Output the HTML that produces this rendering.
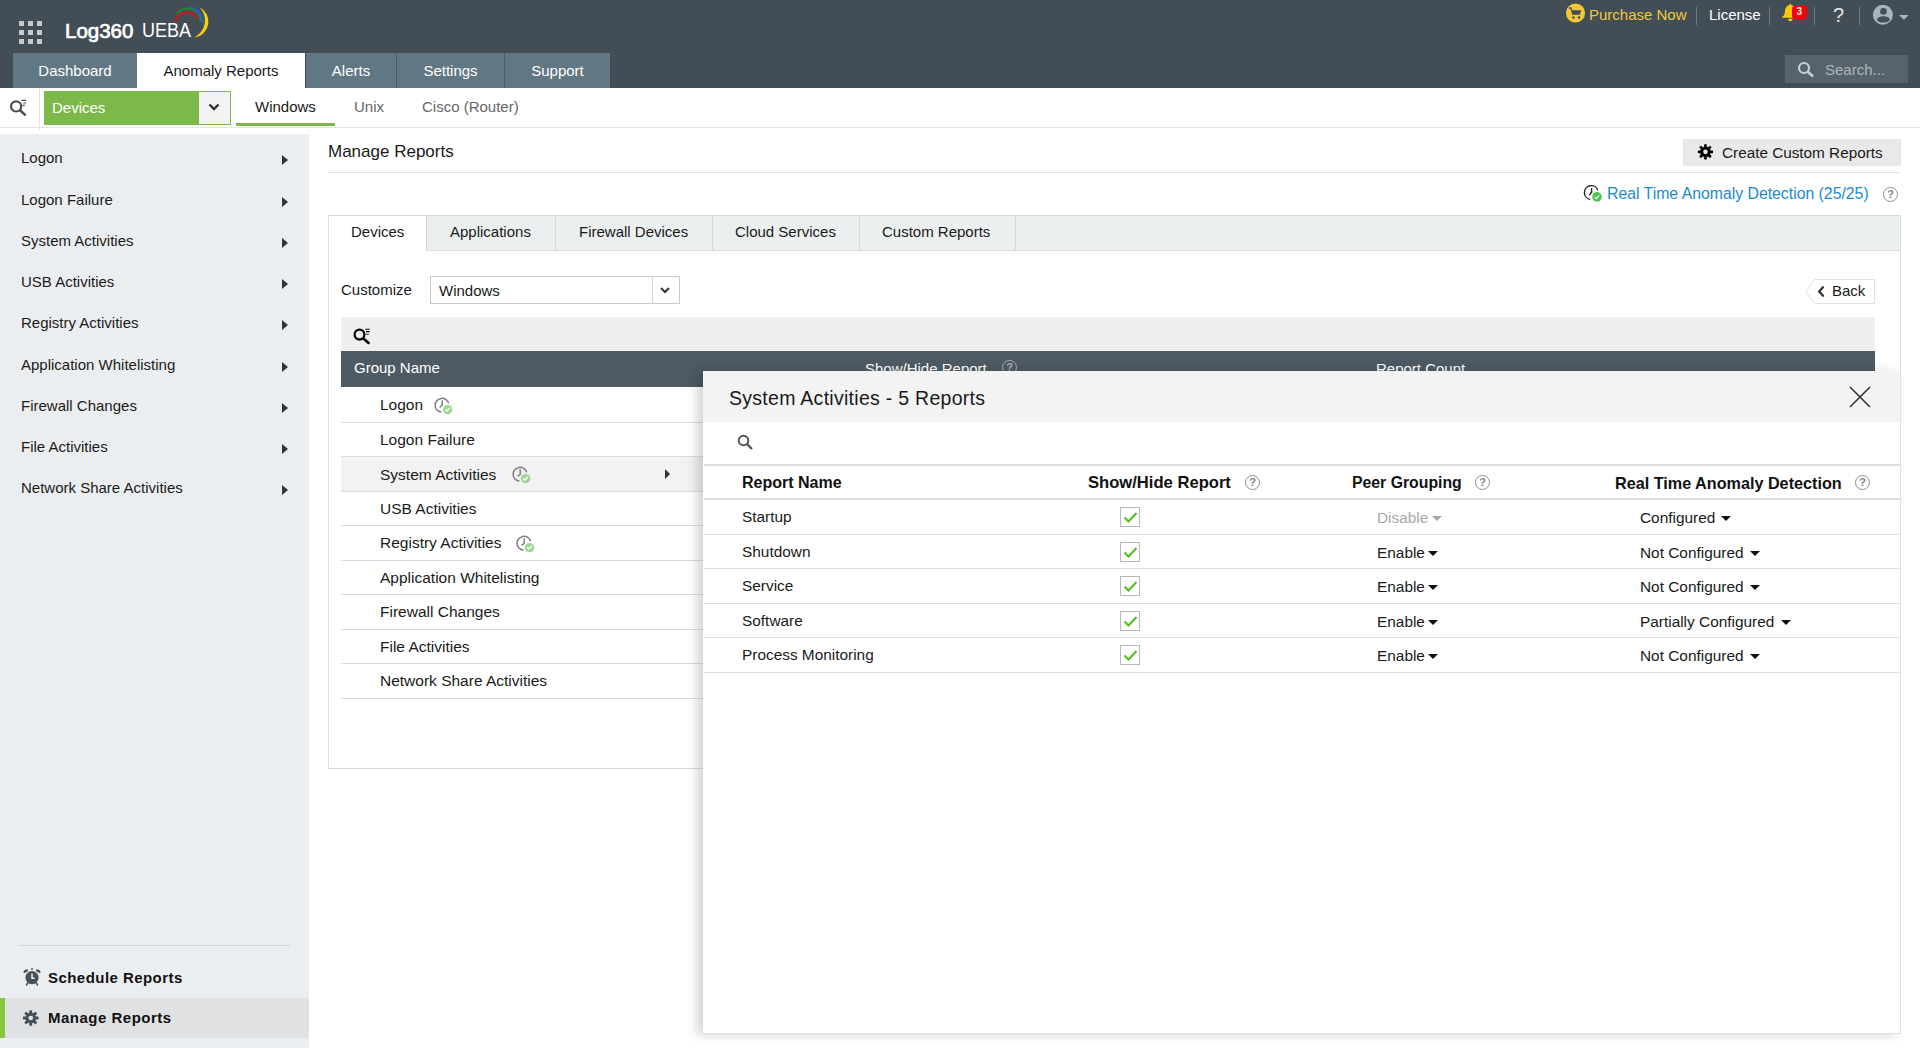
<!DOCTYPE html>
<html><head><meta charset="utf-8">
<style>
*{margin:0;padding:0;box-sizing:border-box}
html,body{width:1920px;height:1048px;overflow:hidden;background:#fff;font-family:"Liberation Sans",sans-serif;color:#1a1a1a}
.a{position:absolute}
.t{position:absolute;white-space:nowrap;line-height:1}
#hdr{left:0;top:0;width:1920px;height:88px;background:#424d56}
.tab{position:absolute;top:53px;height:35px;background:#627784;color:#fff;font-size:15px;line-height:35px;text-align:center}
.sb{position:absolute;left:21px;font-size:15px;color:#1b1b1b}
.sba{position:absolute;left:282px;width:0;height:0;border-top:5px solid transparent;border-bottom:5px solid transparent;border-left:6px solid #333}
.row{position:absolute;left:341px;width:362px;border-bottom:1px solid #dcdcdc}
.rt{position:absolute;left:380px;font-size:15.5px;color:#1a1a1a}
.mrow{position:absolute;left:704px;width:1196px;border-bottom:1px solid #dedede}
.mt{position:absolute;font-size:15.4px;color:#1a1a1a}
.cb{position:absolute;left:1120px;width:20px;height:20px;border:1px solid #b9b9b9;background:#fff}
.cb svg{position:absolute;left:2px;top:3px}
.help{position:absolute;width:15px;height:15px;border:1px solid #8f8f8f;border-radius:50%;font-size:11px;font-weight:bold;line-height:13px;text-align:center;color:#808488}
.caret{position:absolute;width:0;height:0;border-left:5px solid transparent;border-right:5px solid transparent;border-top:5px solid #111}
.div{position:absolute;top:7px;width:1px;height:18px;background:#6f7a82}
</style></head><body>
<!-- HEADER -->
<div id="hdr" class="a"></div>
<!-- grid icon -->
<svg class="a" style="left:19px;top:21px" width="23" height="23" viewBox="0 0 23 23" fill="#c9c9c9">
<rect x="0" y="0" width="5" height="5"/><rect x="9" y="0" width="5" height="5"/><rect x="18" y="0" width="5" height="5"/>
<rect x="0" y="9" width="5" height="5"/><rect x="9" y="9" width="5" height="5"/><rect x="18" y="9" width="5" height="5"/>
<rect x="0" y="18" width="5" height="5"/><rect x="9" y="18" width="5" height="5"/><rect x="18" y="18" width="5" height="5"/>
</svg>
<div class="t" style="left:65px;top:21px;font-size:20.5px;color:#fff;-webkit-text-stroke:0.7px #fff">Log360</div>
<div class="t" style="left:142px;top:20px;font-size:20px;color:#fff;transform:scaleX(0.9);transform-origin:0 0">UEBA</div>
<svg class="a" style="left:165px;top:0px" width="50" height="45" viewBox="0 0 50 45" fill="none">
<path d="M10.3 21.9 A12.1 12.1 0 0 1 32.6 18.5" stroke="#e3101b" stroke-width="1.8"/>
<path d="M12 13.7 A13.2 13.2 0 0 1 35.6 21.5" stroke="#21892f" stroke-width="2"/>
<path d="M21.9 6.4 A15.8 15.8 0 0 1 37.8 27.9 A22.7 22.7 0 0 0 21.9 6.4Z" fill="#2a62ad"/>
<path d="M34.4 7.3 A15.9 15.9 0 0 1 29.2 37.4 A18.6 18.6 0 0 0 34.4 7.3Z" fill="#f7cf0a"/>
</svg>
<!-- top right -->
<svg class="a" style="left:1565px;top:3px" width="21" height="21" viewBox="0 0 21 21">
<circle cx="10.5" cy="10" r="9.6" fill="#f2c834"/>
<path d="M6.2 7.2 H16.1 L15 11.7 H7.2 Z" fill="#424d56"/>
<path d="M3.8 5 H5.8 L6.8 7.8" stroke="#424d56" stroke-width="1.4" fill="none"/>
<circle cx="8.5" cy="14.5" r="1.25" fill="#424d56"/><circle cx="14" cy="14.5" r="1.25" fill="#424d56"/>
</svg>
<div class="t" style="left:1589px;top:7px;font-size:15px;color:#f0c83c">Purchase Now</div>
<div class="div" style="left:1696px"></div>
<div class="t" style="left:1709px;top:7px;font-size:15px;color:#fff">License</div>
<div class="div" style="left:1769px"></div>
<svg class="a" style="left:1781px;top:0px" width="28" height="24" viewBox="0 0 28 24">
<path d="M9.4 3.8 Q10.2 3.8 10.4 5 Q14.6 6 14.8 11 Q15 15.5 17.6 16.8 V17.8 H1.2 V16.8 Q3.8 15.5 4 11 Q4.2 6 8.4 5 Q8.6 3.8 9.4 3.8Z" fill="#f6cb0c"/>
<path d="M6.8 18.7 H11.9 Q11 21.2 9.4 21.2 Q7.8 21.2 6.8 18.7Z" fill="#f6cb0c"/>
<rect x="11" y="5.7" width="15" height="13.4" rx="3.5" fill="#ff0000"/>
<text x="18.3" y="15.2" font-size="10" font-weight="bold" fill="#fff" text-anchor="middle" font-family="Liberation Sans">3</text>
</svg>
<div class="div" style="left:1814px"></div>
<div class="t" style="left:1833px;top:5px;font-size:20px;color:#e6e6e6">?</div>
<div class="div" style="left:1859px"></div>
<svg class="a" style="left:1872px;top:5px" width="40" height="21" viewBox="0 0 40 21">
<circle cx="10.9" cy="9.8" r="10" fill="#a9b5bc"/>
<circle cx="11.5" cy="6.4" r="3.3" fill="#434e57"/>
<ellipse cx="11.4" cy="14.4" rx="6.4" ry="3.2" fill="#434e57"/>
<path d="M27 10 L36.8 10 L31.9 14.7Z" fill="#a9b5bc"/>
</svg>
<!-- search -->
<div class="a" style="left:1785px;top:55px;width:123px;height:28px;background:#57636c"></div>
<svg class="a" style="left:1797px;top:61px" width="18" height="17" viewBox="0 0 18 17">
<circle cx="7" cy="7" r="5" stroke="#c8cdd0" stroke-width="2.2" fill="none"/>
<path d="M10.5 10.5 L16 15.5" stroke="#c8cdd0" stroke-width="2.6"/>
</svg>
<div class="t" style="left:1825px;top:62px;font-size:15px;color:#aeb5ba">Search...</div>

<!-- tabs -->
<div class="tab" style="left:13px;width:124px">Dashboard</div>
<div class="tab" style="left:137px;width:168px;background:#fff;color:#1a1a1a">Anomaly Reports</div>
<div class="tab" style="left:306px;width:90px">Alerts</div>
<div class="tab" style="left:397px;width:107px">Settings</div>
<div class="tab" style="left:505px;width:105px">Support</div>
<div class="a" style="left:396px;top:53px;width:1px;height:35px;background:#4d5d68"></div>
<div class="a" style="left:504px;top:53px;width:1px;height:35px;background:#4d5d68"></div>

<!-- sub bar -->
<div class="a" style="left:0;top:127px;width:1920px;height:1px;background:#e3e3e3"></div>
<div class="a" style="left:39px;top:88px;width:1px;height:42px;background:#e3e3e3"></div>
<svg class="a" style="left:5px;top:95px" width="24" height="24" viewBox="0 0 24 24">
<circle cx="11.1" cy="11.4" r="5.1" stroke="#4a5056" stroke-width="2.2" fill="none"/>
<path d="M15 15.3 L19.8 19.6" stroke="#4a5056" stroke-width="2.6" stroke-linecap="round"/>
<path d="M16.5 5.4 H21 M18.2 8 H21 M17.5 10.4 H19.8" stroke="#4a5056" stroke-width="1.1"/>
</svg>
<div class="a" style="left:44px;top:91px;width:187px;height:34px;background:#7cb948;border:1px solid #7cb948"></div>
<div class="a" style="left:199px;top:92px;width:31px;height:32px;background:#f2f2f2"></div>
<svg class="a" style="left:208px;top:103px" width="12" height="9" viewBox="0 0 12 9"><path d="M1.5 1.5 L6 6 L10.5 1.5" stroke="#333" stroke-width="2.4" fill="none"/></svg>
<div class="t" style="left:52px;top:100px;font-size:15px;color:#fff">Devices</div>
<div class="t" style="left:255px;top:99px;font-size:15px;color:#1a1a1a">Windows</div>
<div class="a" style="left:236px;top:123px;width:99px;height:3px;background:#7cb948"></div>
<div class="t" style="left:354px;top:99px;font-size:15px;color:#666">Unix</div>
<div class="t" style="left:422px;top:99px;font-size:15px;color:#666">Cisco (Router)</div>

<!-- SIDEBAR -->
<div class="a" style="left:0;top:134px;width:309px;height:914px;background:#ebeef0"></div>
<div class="t sb" style="top:150px">Logon</div><div class="sba" style="top:155px"></div>
<div class="t sb" style="top:192px">Logon Failure</div><div class="sba" style="top:197px"></div>
<div class="t sb" style="top:233px">System Activities</div><div class="sba" style="top:238px"></div>
<div class="t sb" style="top:274px">USB Activities</div><div class="sba" style="top:279px"></div>
<div class="t sb" style="top:315px">Registry Activities</div><div class="sba" style="top:320px"></div>
<div class="t sb" style="top:357px">Application Whitelisting</div><div class="sba" style="top:362px"></div>
<div class="t sb" style="top:398px">Firewall Changes</div><div class="sba" style="top:403px"></div>
<div class="t sb" style="top:439px">File Activities</div><div class="sba" style="top:444px"></div>
<div class="t sb" style="top:480px">Network Share Activities</div><div class="sba" style="top:485px"></div>
<div class="a" style="left:19px;top:945px;width:271px;height:1px;background:#cfd3d5"></div>
<div class="a" style="left:0;top:998px;width:309px;height:40px;background:#dfe1e2"></div>
<div class="a" style="left:0;top:998px;width:5px;height:40px;background:#8cc63f"></div>
<svg class="a" style="left:15px;top:960px" width="30" height="30" viewBox="0 0 30 30">
<g fill="#465059">
<circle cx="17" cy="17.6" r="6.6"/>

<rect x="16" y="8" width="2" height="2" rx="1"/>
</g>
<path d="M9.4 12.8 Q10 10.4 12.8 10.4 M24.6 12.8 Q24 10.4 21.2 10.4" stroke="#465059" stroke-width="2.3" fill="none"/>
<path d="M12.8 23 L11.6 24.8 M21.2 23 L22.4 24.8" stroke="#465059" stroke-width="1.6" stroke-linecap="round"/>
<path d="M17 13.6 V18.2 H19.6" stroke="#eceef0" stroke-width="1.5" fill="none"/>
</svg>
<div class="t" style="left:48px;top:970px;font-size:15px;letter-spacing:0.45px;font-weight:bold;color:#111">Schedule Reports</div>
<svg class="a" style="left:20px;top:1007px" width="22" height="22" viewBox="0 0 22 22"><g fill="#465059"><rect x="9.35" y="3.2" width="2.8" height="15.6" rx="0.6" transform="rotate(0 10.75 11)"/><rect x="9.35" y="3.2" width="2.8" height="15.6" rx="0.6" transform="rotate(45 10.75 11)"/><rect x="9.35" y="3.2" width="2.8" height="15.6" rx="0.6" transform="rotate(90 10.75 11)"/><rect x="9.35" y="3.2" width="2.8" height="15.6" rx="0.6" transform="rotate(135 10.75 11)"/><circle cx="10.75" cy="11" r="5.4"/></g><circle cx="10.75" cy="11" r="2.3" fill="#dfe1e2"/></svg>
<div class="t" style="left:48px;top:1010px;font-size:15px;letter-spacing:0.5px;font-weight:bold;color:#111">Manage Reports</div>

<!-- CONTENT -->
<div class="t" style="left:328px;top:143px;font-size:17px;color:#1a1a1a">Manage Reports</div>
<div class="a" style="left:328px;top:172px;width:1573px;height:1px;background:#e2e2e2"></div>
<div class="a" style="left:1683px;top:139px;width:218px;height:27px;background:#e9e9e9"></div>
<svg class="a" style="left:1695px;top:141px" width="21" height="21" viewBox="0 0 21 21"><g fill="#000"><rect x="9.1" y="3.25" width="2.7" height="15.2" rx="0.6" transform="rotate(0 10.45 10.85)"/><rect x="9.1" y="3.25" width="2.7" height="15.2" rx="0.6" transform="rotate(45 10.45 10.85)"/><rect x="9.1" y="3.25" width="2.7" height="15.2" rx="0.6" transform="rotate(90 10.45 10.85)"/><rect x="9.1" y="3.25" width="2.7" height="15.2" rx="0.6" transform="rotate(135 10.45 10.85)"/><circle cx="10.45" cy="10.85" r="5.3"/></g><circle cx="10.45" cy="10.85" r="2.3" fill="#e9e9e9"/></svg>
<div class="t" style="left:1722px;top:145px;font-size:15.3px;color:#1a1a1a">Create Custom Reports</div>
<!-- RTAD -->
<svg class="a" style="left:1580px;top:180px" width="26" height="26" viewBox="0 0 26 26">
<path d="M17.8 10.3 A6.9 6.9 0 1 0 10.3 19.4" stroke="#222" stroke-width="1.4" fill="none"/>
<path d="M11.6 8.1 V12 L9.4 15.3" stroke="#222" stroke-width="1.4" fill="none"/>
<circle cx="17" cy="16.9" r="4.8" fill="#4cc54c"/>
<path d="M14.7 17.2 L16.3 18.6 L19.1 15.6" stroke="#fff" stroke-width="1.3" fill="none"/>
</svg>
<div class="t" style="left:1607px;top:186px;font-size:15.8px;color:#1a8ad0">Real Time Anomaly Detection (25/25)</div>
<div class="help" style="left:1883px;top:187px">?</div>

<!-- content box -->
<div class="a" style="left:328px;top:215px;width:1573px;height:554px;border:1px solid #dcdcdc;border-top:none"></div>
<div class="a" style="left:328px;top:215px;width:1573px;height:36px;background:#eceff0;border:1px solid #dcdcdc"></div>
<div class="a" style="left:328px;top:215px;width:99px;height:36px;background:#fff;border:1px solid #dcdcdc;border-bottom:none;border-right:1px solid #d2d2d2"></div>
<div class="a" style="left:555px;top:216px;width:1px;height:34px;background:#d6d6d6"></div>
<div class="a" style="left:712px;top:216px;width:1px;height:34px;background:#d6d6d6"></div>
<div class="a" style="left:859px;top:216px;width:1px;height:34px;background:#d6d6d6"></div>
<div class="a" style="left:1015px;top:216px;width:1px;height:34px;background:#d6d6d6"></div>
<div class="t" style="left:351px;top:224px;font-size:15px">Devices</div>
<div class="t" style="left:450px;top:224px;font-size:15px">Applications</div>
<div class="t" style="left:579px;top:224px;font-size:15px">Firewall Devices</div>
<div class="t" style="left:735px;top:224px;font-size:15px">Cloud Services</div>
<div class="t" style="left:882px;top:224px;font-size:15px">Custom Reports</div>

<div class="t" style="left:341px;top:282px;font-size:15px">Customize</div>
<div class="a" style="left:430px;top:276px;width:250px;height:28px;border:1px solid #c9c9c9;background:#fff"></div>
<div class="a" style="left:652px;top:277px;width:1px;height:26px;background:#d5d5d5"></div>
<svg class="a" style="left:659px;top:286px" width="12" height="9" viewBox="0 0 12 9"><path d="M2 2 L6 6 L10 2" stroke="#333" stroke-width="2" fill="none"/></svg>
<div class="t" style="left:439px;top:283px;font-size:15px">Windows</div>

<!-- back -->
<svg class="a" style="left:1805px;top:279px" width="70" height="25" viewBox="0 0 70 25">
<path d="M9.5 0.5 H69.5 V24.5 H9.5 L0.8 12.5 Z" fill="#fff" stroke="#e0e0e0"/>
<path d="M18 8.3 L14.2 12.5 L18 16.7" stroke="#333" stroke-width="2.3" fill="none" stroke-linecap="round"/>
</svg>
<div class="t" style="left:1832px;top:283px;font-size:15px">Back</div>

<!-- grey search bar -->
<div class="a" style="left:341px;top:317px;width:1534px;height:34px;background:#efefef"></div>
<svg class="a" style="left:345px;top:320px" width="28" height="28" viewBox="0 0 28 28">
<circle cx="14.5" cy="14.6" r="4.9" stroke="#000" stroke-width="2.3" fill="none"/>
<path d="M18.3 18.6 L23.6 22.9" stroke="#000" stroke-width="2.6" stroke-linecap="round"/>
<path d="M20.3 9.3 H24.7 M21 11.6 H24.7 M21.5 14.3 H23.8" stroke="#000" stroke-width="1.1"/>
</svg>
<!-- table header -->
<div class="a" style="left:341px;top:351px;width:1534px;height:36px;background:#4d5a63"></div>
<div class="t" style="left:354px;top:360px;font-size:15px;color:#fff">Group Name</div>
<div class="t" style="left:865px;top:361px;font-size:15px;color:#fff">Show/Hide Report</div>
<div class="help" style="left:1002px;top:360px;border-color:#aab;color:#aab">?</div>
<div class="t" style="left:1376px;top:361px;font-size:15px;color:#fff">Report Count</div>

<!-- rows -->
<div class="row" style="top:387px;height:36px"></div>
<div class="row" style="top:423px;height:34px"></div>
<div class="row" style="top:457px;height:35px;background:#f2f2f2"></div>
<div class="row" style="top:492px;height:34px"></div>
<div class="row" style="top:526px;height:35px"></div>
<div class="row" style="top:561px;height:34px"></div>
<div class="row" style="top:595px;height:35px"></div>
<div class="row" style="top:630px;height:34px"></div>
<div class="row" style="top:664px;height:35px"></div>
<div class="rt t" style="top:397px">Logon</div>
<div class="rt t" style="top:432px">Logon Failure</div>
<div class="rt t" style="top:467px">System Activities</div>
<div class="rt t" style="top:501px">USB Activities</div>
<div class="rt t" style="top:535px">Registry Activities</div>
<div class="rt t" style="top:570px">Application Whitelisting</div>
<div class="rt t" style="top:604px">Firewall Changes</div>
<div class="rt t" style="top:639px">File Activities</div>
<div class="rt t" style="top:673px">Network Share Activities</div>
<svg class="a" style="left:430px;top:392px" width="26" height="26" viewBox="0 0 26 26"><path d="M18.7 11.4 A6.9 6.9 0 1 0 11.4 20.1" stroke="#7a7e82" stroke-width="1.5" fill="none"/><path d="M12.2 8.2 V13.2 L9.6 15.4" stroke="#7a7e82" stroke-width="1.5" fill="none"/><circle cx="17.6" cy="17.6" r="4.7" fill="#9fd693"/><path d="M15.3 17.5 L16.7 19 L19.9 16" stroke="#fff" stroke-width="1.3" fill="none"/></svg>
<svg class="a" style="left:508px;top:461px" width="26" height="26" viewBox="0 0 26 26"><path d="M18.7 11.4 A6.9 6.9 0 1 0 11.4 20.1" stroke="#7a7e82" stroke-width="1.5" fill="none"/><path d="M12.2 8.2 V13.2 L9.6 15.4" stroke="#7a7e82" stroke-width="1.5" fill="none"/><circle cx="17.6" cy="17.6" r="4.7" fill="#9fd693"/><path d="M15.3 17.5 L16.7 19 L19.9 16" stroke="#fff" stroke-width="1.3" fill="none"/></svg>
<svg class="a" style="left:512px;top:530px" width="26" height="26" viewBox="0 0 26 26"><path d="M18.7 11.4 A6.9 6.9 0 1 0 11.4 20.1" stroke="#7a7e82" stroke-width="1.5" fill="none"/><path d="M12.2 8.2 V13.2 L9.6 15.4" stroke="#7a7e82" stroke-width="1.5" fill="none"/><circle cx="17.6" cy="17.6" r="4.7" fill="#9fd693"/><path d="M15.3 17.5 L16.7 19 L19.9 16" stroke="#fff" stroke-width="1.3" fill="none"/></svg>
<div class="a" style="left:665px;top:469px;width:0;height:0;border-top:5px solid transparent;border-bottom:5px solid transparent;border-left:5px solid #333"></div>

<!-- MODAL -->
<div class="a" style="left:703px;top:371px;width:1198px;height:663px;background:#fff;border-right:1px solid #e2e2e2;border-bottom:1px solid #e2e2e2;box-shadow:-6px 1px 10px rgba(0,0,0,0.17)"></div>
<div class="a" style="left:703px;top:371px;width:1197px;height:51px;background:#f3f3f3"></div>
<div class="t" style="left:729px;top:389px;font-size:19.5px;letter-spacing:0.28px;color:#1a1a1a">System Activities - 5 Reports</div>
<svg class="a" style="left:1849px;top:386px" width="22" height="22" viewBox="0 0 22 22"><path d="M1 1 L21 21 M21 1 L1 21" stroke="#333" stroke-width="1.6"/></svg>
<svg class="a" style="left:737px;top:434px" width="17" height="17" viewBox="0 0 17 17">
<circle cx="6.5" cy="6.5" r="4.8" stroke="#555" stroke-width="2" fill="none"/>
<path d="M10 10 L15 15" stroke="#555" stroke-width="2.4"/>
</svg>
<div class="a" style="left:704px;top:464px;width:1196px;height:2px;background:#dcdcdc"></div>
<div class="t" style="left:742px;top:475px;font-size:16px;font-weight:bold;color:#111">Report Name</div>
<div class="t" style="left:1088px;top:475px;font-size:16.6px;font-weight:bold;color:#111">Show/Hide Report</div>
<div class="help" style="left:1245px;top:475px">?</div>
<div class="t" style="left:1352px;top:475px;font-size:15.8px;font-weight:bold;color:#111">Peer Grouping</div>
<div class="help" style="left:1475px;top:475px">?</div>
<div class="t" style="left:1615px;top:475px;font-size:16.2px;font-weight:bold;color:#111">Real Time Anomaly Detection</div>
<div class="help" style="left:1855px;top:475px">?</div>
<div class="a" style="left:704px;top:498px;width:1196px;height:2px;background:#dcdcdc"></div>

<div class="mrow" style="top:500px;height:35px"></div>
<div class="mrow" style="top:535px;height:34px"></div>
<div class="mrow" style="top:569px;height:35px"></div>
<div class="mrow" style="top:604px;height:34px"></div>
<div class="mrow" style="top:638px;height:35px"></div>

<div class="mt t" style="left:742px;top:509px">Startup</div>
<div class="mt t" style="left:742px;top:544px">Shutdown</div>
<div class="mt t" style="left:742px;top:578px">Service</div>
<div class="mt t" style="left:742px;top:613px">Software</div>
<div class="mt t" style="left:742px;top:647px">Process Monitoring</div>

<div class="cb" style="top:507px"><svg width="15" height="13" viewBox="0 0 15 13"><path d="M1.5 6.5 L5.5 10.5 L13.5 2" stroke="#52c01a" stroke-width="2" fill="none"/></svg></div>
<div class="cb" style="top:542px"><svg width="15" height="13" viewBox="0 0 15 13"><path d="M1.5 6.5 L5.5 10.5 L13.5 2" stroke="#52c01a" stroke-width="2" fill="none"/></svg></div>
<div class="cb" style="top:576px"><svg width="15" height="13" viewBox="0 0 15 13"><path d="M1.5 6.5 L5.5 10.5 L13.5 2" stroke="#52c01a" stroke-width="2" fill="none"/></svg></div>
<div class="cb" style="top:611px"><svg width="15" height="13" viewBox="0 0 15 13"><path d="M1.5 6.5 L5.5 10.5 L13.5 2" stroke="#52c01a" stroke-width="2" fill="none"/></svg></div>
<div class="cb" style="top:645px"><svg width="15" height="13" viewBox="0 0 15 13"><path d="M1.5 6.5 L5.5 10.5 L13.5 2" stroke="#52c01a" stroke-width="2" fill="none"/></svg></div>

<div class="mt t" style="left:1377px;top:510px;color:#a8a8a8">Disable</div>
<div class="caret" style="left:1432px;top:516px;border-top-color:#a8a8a8"></div>
<div class="mt t" style="left:1377px;top:545px">Enable</div><div class="caret" style="left:1428px;top:551px"></div>
<div class="mt t" style="left:1377px;top:579px">Enable</div><div class="caret" style="left:1428px;top:585px"></div>
<div class="mt t" style="left:1377px;top:614px">Enable</div><div class="caret" style="left:1428px;top:620px"></div>
<div class="mt t" style="left:1377px;top:648px">Enable</div><div class="caret" style="left:1428px;top:654px"></div>

<div class="mt t" style="left:1640px;top:510px">Configured</div><div class="caret" style="left:1721px;top:516px"></div>
<div class="mt t" style="left:1640px;top:545px">Not Configured</div><div class="caret" style="left:1750px;top:551px"></div>
<div class="mt t" style="left:1640px;top:579px">Not Configured</div><div class="caret" style="left:1750px;top:585px"></div>
<div class="mt t" style="left:1640px;top:614px">Partially Configured</div><div class="caret" style="left:1781px;top:620px"></div>
<div class="mt t" style="left:1640px;top:648px">Not Configured</div><div class="caret" style="left:1750px;top:654px"></div>
</body></html>
